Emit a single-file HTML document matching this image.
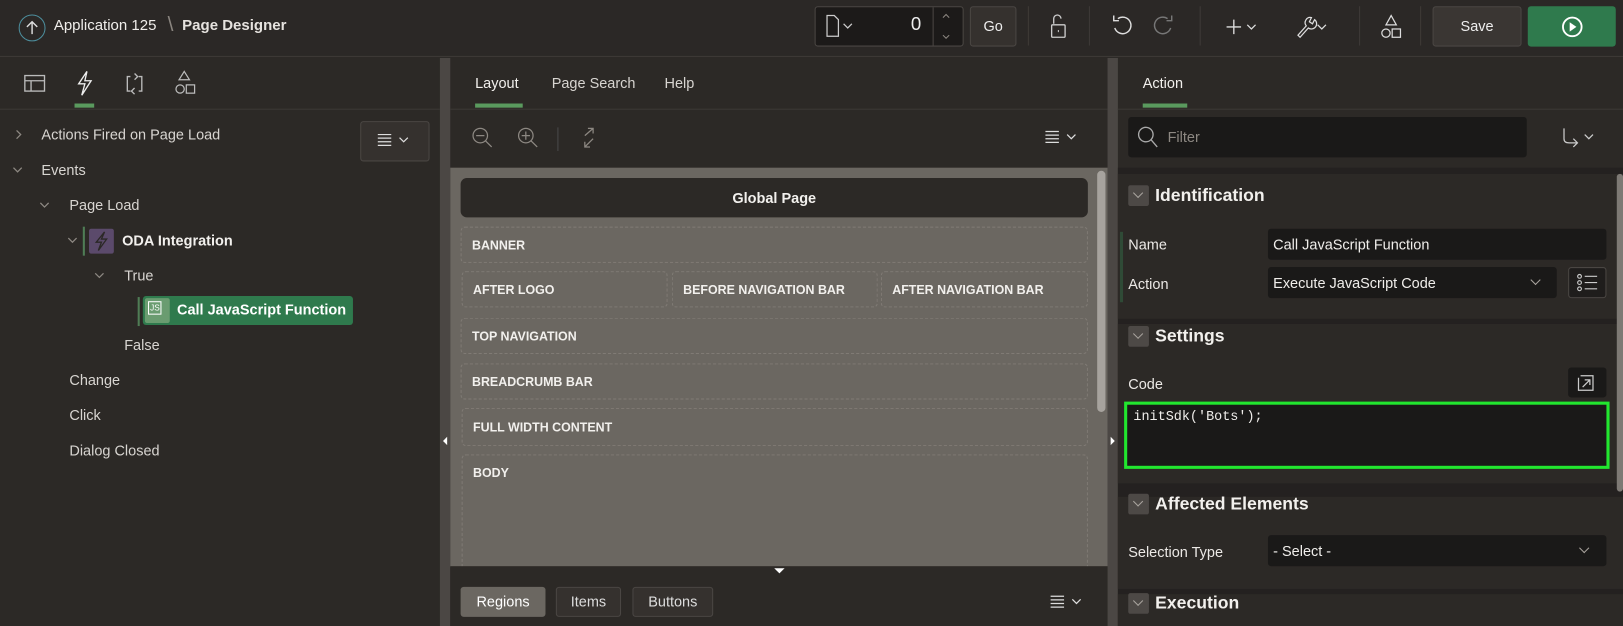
<!DOCTYPE html>
<html><head><meta charset="utf-8"><style>
*{box-sizing:border-box;margin:0;padding:0}
html,body{width:1623px;height:626px;overflow:hidden;background:#2c2926}
#w{position:absolute;left:0;top:0;width:1568px;height:605px;transform:scale(1.03508);transform-origin:0 0;font-family:"Liberation Sans",sans-serif;color:#e8e6e3;overflow:hidden}
.a{position:absolute}
.t{font-size:14px;color:#d8d5d1;white-space:nowrap}
.rg{position:absolute;border:1px dashed #807b75;border-radius:4px;font-size:12px;font-weight:bold;color:#f2f0ed;padding-left:10px;display:flex;align-items:center}
.btn{position:absolute;border:1px solid #4a4643;border-radius:3px;background:#35312e}
.chev{position:absolute;width:7px;height:7px;border-right:1.3px solid #a9a49e;border-bottom:1.3px solid #a9a49e}
.sec{position:absolute;left:1080px;width:537px;background:#2c2926}
.cb{position:absolute;width:20px;height:20px;background:#4d4946;border-radius:2px}
.lbl{position:absolute;font-size:14px;color:#ece9e6}
.inp{position:absolute;background:#1a1918;border-radius:3px;font-size:14px;color:#f0eeeb;padding-left:5px;display:flex;align-items:center}
.h{position:absolute;font-size:17px;font-weight:bold;color:#f2f0ed}
</style></head><body><div id="w">
<div class="a" style="left:0;top:0;width:1623px;height:55px;background:#2b2826;border-bottom:1px solid #3e3a37"></div>
<div class="a" style="left:18px;top:14px;width:26px;height:26px;border:1.5px solid #4d8f9e;border-radius:50%"></div>
<svg class="a" style="left:24px;top:19px" width="14" height="16"><path d="M7 2V14M2 7L7 2L12 7" stroke="#ddd" stroke-width="1.4" fill="none"/></svg>
<div class="a t" style="left:52px;top:17px;font-size:14.5px;color:#f0eeeb">Application 125</div>
<div class="a" style="left:162px;top:13px;font-size:20px;color:#8a857f">\</div>
<div class="a t" style="left:176px;top:17px;font-size:14.5px;font-weight:bold;color:#e6e3df">Page Designer</div>
<div class="a" style="left:787px;top:6px;width:144px;height:39px;background:#1c1a19;border:1px solid #4a4643;border-radius:3px"></div>
<div class="a" style="left:901px;top:7px;width:1px;height:37px;background:#4a4643"></div>
<svg class="a" style="left:797px;top:13px" width="40" height="24"><path d="M2 2H9L13 6V22H2Z" stroke="#ccc" fill="none" stroke-width="1.2"/><path d="M18 10L22 14L26 10" stroke="#ccc" fill="none" stroke-width="1.2"/></svg>
<div class="a" style="left:880px;top:13px;font-size:18px;color:#eee">0</div>
<svg class="a" style="left:906px;top:10px" width="16" height="30"><path d="M5 7L8 4L11 7M5 24L8 27L11 24" stroke="#8d8882" fill="none"/></svg>
<div class="btn" style="left:937px;top:6px;width:45px;height:39px;color:#eee;font-size:14px;text-align:center;line-height:37px">Go</div>
<div class="a" style="left:993px;top:6px;width:1px;height:38px;background:#3e3a37"></div>
<svg class="a" style="left:1010px;top:13px" width="26" height="26"><path d="M8 10V5a3.5 3.5 0 0 1 7 0" stroke="#ccc" fill="none" stroke-width="1.3"/><rect x="6" y="11" width="13" height="12" rx="1" stroke="#ccc" fill="none" stroke-width="1.3"/><path d="M12.5 16v2" stroke="#ccc"/></svg>
<div class="a" style="left:1052px;top:6px;width:1px;height:38px;background:#3e3a37"></div>
<svg class="a" style="left:1072px;top:12px" width="70" height="28"><path d="M8 6A8 8 0 1 1 5 15" stroke="#ddd" fill="none" stroke-width="1.4"/><path d="M4 3V8H9" stroke="#ddd" fill="none" stroke-width="1.4"/><path d="M56 6A8 8 0 1 0 59 15" stroke="#777" fill="none" stroke-width="1.4"/><path d="M60 3V8H55" stroke="#777" fill="none" stroke-width="1.4"/></svg>
<div class="a" style="left:1159px;top:6px;width:1px;height:38px;background:#3e3a37"></div>
<svg class="a" style="left:1182px;top:14px" width="110" height="24"><path d="M3 12H17M10 5V19" stroke="#ddd" stroke-width="1.3"/><path d="M23 10L27 14L31 10" stroke="#ddd" fill="none" stroke-width="1.2"/><path d="M72 20L80 11A5 5 0 0 1 85 3L83 7L86 9L88 5A5 5 0 0 1 82 13L74 22Z" stroke="#ddd" fill="none" stroke-width="1.2"/><path d="M91 10L95 14L99 10" stroke="#ddd" fill="none" stroke-width="1.2"/></svg>
<div class="a" style="left:1313px;top:6px;width:1px;height:38px;background:#3e3a37"></div>
<svg class="a" style="left:1332px;top:13px" width="24" height="26"><path d="M12 2L17 11H7Z" stroke="#ddd" fill="none" stroke-width="1.2"/><circle cx="7" cy="19" r="4" stroke="#ddd" fill="none" stroke-width="1.2"/><rect x="13" y="15" width="8" height="8" stroke="#ddd" fill="none" stroke-width="1.2"/></svg>
<div class="a" style="left:1372px;top:6px;width:1px;height:38px;background:#3e3a37"></div>
<div class="btn" style="left:1384px;top:6px;width:86px;height:39px;color:#eee;font-size:14px;text-align:center;line-height:37px;background:#3a3633">Save</div>
<div class="a" style="left:1476px;top:6px;width:85px;height:39px;background:#2f7a4d;border-radius:3px"></div>
<svg class="a" style="left:1507px;top:14px" width="24" height="24"><circle cx="12" cy="12" r="9" stroke="#fff" fill="none" stroke-width="1.8"/><path d="M9.5 7.5L16 12L9.5 16.5Z" fill="#fff"/></svg>

<div class="a" style="left:425px;top:56px;width:10px;height:570px;background:#4b4744"></div>
<div class="a" style="left:1070px;top:56px;width:10px;height:570px;background:#4b4744"></div>
<div class="a" style="left:428px;top:422px;width:0;height:0;border-top:4px solid transparent;border-bottom:4px solid transparent;border-right:4px solid #fff"></div>
<div class="a" style="left:1073px;top:422px;width:0;height:0;border-top:4px solid transparent;border-bottom:4px solid transparent;border-left:4px solid #fff"></div>

<div class="a" style="left:0;top:105px;width:425px;height:1px;background:#3c3936"></div>
<svg class="a" style="left:20px;top:66px" width="180" height="30"><rect x="4" y="7" width="19" height="15" stroke="#bbb" fill="none" stroke-width="1.3"/><path d="M4 12H23M10 12V22" stroke="#bbb" stroke-width="1.3"/><path d="M64 3L56 15H62L59 26L68 12H62Z" stroke="#eee" fill="none" stroke-width="1.3"/><path d="M106 8H103V22H106M114 22H117V8H114M110 5L113 8L110 11M110 19L107 22L110 25" stroke="#bbb" fill="none" stroke-width="1.3"/><path d="M158 3L163 11H153Z" stroke="#bbb" fill="none" stroke-width="1.2"/><circle cx="154" cy="20" r="4" stroke="#bbb" fill="none" stroke-width="1.2"/><rect x="160" y="16" width="8" height="8" stroke="#bbb" fill="none" stroke-width="1.2"/></svg>
<div class="a" style="left:72px;top:100px;width:19px;height:4px;background:#5a9a5e"></div>
<div class="btn" style="left:348px;top:117px;width:67px;height:39px;background:#35312e"></div>
<svg class="a" style="left:364px;top:128px" width="36" height="16"><path d="M1 2H14M1 5.5H14M1 9H14M1 12.5H14" stroke="#ddd" stroke-width="1.2"/><path d="M22 5L26 9L30 5" stroke="#ddd" fill="none" stroke-width="1.2"/></svg>
<svg class="a" style="left:8px;top:118px" width="140" height="230" fill="none" stroke="#8d8882" stroke-width="1.2"><path d="M8 8L12 12L8 16"/><path d="M5 44L9 48L13 44"/><path d="M31 78L35 82L39 78"/><path d="M58 112L62 116L66 112"/><path d="M84 146L88 150L92 146"/></svg>
<div class="a t" style="left:40px;top:122px">Actions Fired on Page Load</div>
<div class="a t" style="left:40px;top:156px">Events</div>
<div class="a t" style="left:67px;top:190px">Page Load</div>
<div class="a" style="left:80px;top:219px;width:2px;height:28px;background:#4f7d55"></div>
<div class="a" style="left:86px;top:221px;width:24px;height:24px;background:#5b4a6b;border-radius:2px"></div>
<svg class="a" style="left:90px;top:223px" width="16" height="20"><path d="M11 1L3 11H8L5 19L13 8H8Z" stroke="#2b2826" fill="none" stroke-width="1.3"/></svg>
<div class="a t" style="left:118px;top:224px;font-weight:bold;color:#f2f0ed">ODA Integration</div>
<div class="a t" style="left:120px;top:258px">True</div>
<div class="a" style="left:133px;top:287px;width:2px;height:28px;background:#4f7d55"></div>
<div class="a" style="left:138px;top:286px;width:203px;height:28px;background:#2f7a4d;border-radius:3px"></div>
<div class="a" style="left:140px;top:288px;width:24px;height:24px;background:#6a9c70;border-radius:2px"></div>
<div class="a" style="left:143px;top:291px;font-size:8px;color:#fff;border:1px solid #fff;padding:1px">JS</div>
<div class="a t" style="left:171px;top:291px;font-weight:bold;color:#fff">Call JavaScript Function</div>
<div class="a t" style="left:120px;top:325px">False</div>
<div class="a t" style="left:67px;top:359px">Change</div>
<div class="a t" style="left:67px;top:393px">Click</div>
<div class="a t" style="left:67px;top:427px">Dialog Closed</div>

<div class="a t" style="left:459px;top:72px;color:#f2f0ed">Layout</div>
<div class="a" style="left:459px;top:100px;width:46px;height:4px;background:#5a9a5e"></div>
<div class="a t" style="left:533px;top:72px">Page Search</div>
<div class="a t" style="left:642px;top:72px">Help</div>
<div class="a" style="left:435px;top:105px;width:635px;height:1px;background:#3c3936"></div>
<svg class="a" style="left:455px;top:122px" width="130" height="24" fill="none" stroke="#8d8882" stroke-width="1.2"><circle cx="9" cy="9" r="7"/><path d="M14 14L20 20M5 9H13"/><circle cx="53" cy="9" r="7"/><path d="M58 14L64 20M49 9H57M53 5V13"/><path d="M84 1V24" stroke="#444"/><path d="M110 4L118 -3M113 -3H118V2M116 -2" transform="translate(0,5)"/><path d="M110 20L118 12M110 15V20H115"/></svg>
<svg class="a" style="left:1009px;top:125px" width="36" height="16"><path d="M1 2H14M1 5.5H14M1 9H14M1 12.5H14" stroke="#ddd" stroke-width="1.2"/><path d="M22 5L26 9L30 5" stroke="#ddd" fill="none" stroke-width="1.2"/></svg>
<div class="a" style="left:435px;top:162px;width:635px;height:386px;background:#6b6761"></div>
<div class="a" style="left:1060px;top:165px;width:8px;height:233px;background:#a7a39e;border-radius:4px"></div>
<div class="a" style="left:445px;top:172px;width:606px;height:38px;background:#2c2926;border-radius:6px;font-size:14px;font-weight:bold;color:#f2f0ed;text-align:center;line-height:38px">Global Page</div>
<div class="rg" style="left:445px;top:219px;width:606px;height:35px">BANNER</div>
<div class="rg" style="left:446px;top:262px;width:199px;height:35px">AFTER LOGO</div>
<div class="rg" style="left:649px;top:262px;width:199px;height:35px">BEFORE NAVIGATION BAR</div>
<div class="rg" style="left:851px;top:262px;width:200px;height:35px">AFTER NAVIGATION BAR</div>
<div class="rg" style="left:445px;top:307px;width:606px;height:35px">TOP NAVIGATION</div>
<div class="rg" style="left:445px;top:351px;width:606px;height:35px">BREADCRUMB BAR</div>
<div class="rg" style="left:446px;top:394px;width:605px;height:37px">FULL WIDTH CONTENT</div>
<div class="rg" style="left:446px;top:439px;width:605px;height:120px;align-items:flex-start;padding-top:10px">BODY</div>
<div class="a" style="left:435px;top:547px;width:635px;height:79px;background:#2c2926"></div>
<div class="a" style="left:748px;top:549px;width:0;height:0;border-left:5px solid transparent;border-right:5px solid transparent;border-top:5px solid #fff"></div>
<div class="a" style="left:445px;top:567px;width:82px;height:29px;background:#6b6761;border-radius:3px;font-size:14px;color:#fff;text-align:center;line-height:29px">Regions</div>
<div class="btn" style="left:537px;top:567px;width:63px;height:29px;font-size:14px;color:#ddd;text-align:center;line-height:27px">Items</div>
<div class="btn" style="left:611px;top:567px;width:78px;height:29px;font-size:14px;color:#ddd;text-align:center;line-height:27px">Buttons</div>
<svg class="a" style="left:1014px;top:574px" width="36" height="16"><path d="M1 2H14M1 5.5H14M1 9H14M1 12.5H14" stroke="#ddd" stroke-width="1.2"/><path d="M22 5L26 9L30 5" stroke="#ddd" fill="none" stroke-width="1.2"/></svg>

<div class="a t" style="left:1104px;top:72px;color:#f2f0ed">Action</div>
<div class="a" style="left:1104px;top:100px;width:43px;height:4px;background:#5a9a5e"></div>
<div class="a" style="left:1080px;top:105px;width:543px;height:1px;background:#3c3936"></div>
<div class="a" style="left:1090px;top:113px;width:385px;height:39px;background:#1a1918;border-radius:3px"></div>
<svg class="a" style="left:1098px;top:121px" width="24" height="24"><circle cx="9" cy="9" r="7" stroke="#aaa" fill="none" stroke-width="1.3"/><path d="M14 14L20 21" stroke="#aaa" stroke-width="1.3"/></svg>
<div class="a t" style="left:1128px;top:124px;color:#8d8882">Filter</div>
<svg class="a" style="left:1508px;top:122px" width="42" height="26"><path d="M3 2V12Q3 16 8 16H16M12 12L16 16L12 20" stroke="#ccc" fill="none" stroke-width="1.2"/><path d="M23 8L27 12L31 8" stroke="#ccc" fill="none" stroke-width="1.2"/></svg>
<div class="a" style="left:1080px;top:162px;width:543px;height:464px;background:#242120"></div>
<div class="sec" style="top:168px;height:140px"></div>
<div class="sec" style="top:313px;height:154px"></div>
<div class="sec" style="top:480px;height:89px"></div>
<div class="sec" style="top:574px;height:52px"></div>
<div class="a" style="left:1562px;top:168px;width:6px;height:307px;background:#7d7974;border-radius:3px"></div>
<div class="cb" style="left:1090px;top:179px"></div><div class="chev" style="left:1096px;top:183px;transform:rotate(45deg)"></div>
<div class="h" style="left:1116px;top:179px">Identification</div>
<div class="a" style="left:1082px;top:224px;width:3px;height:68px;background:#2f4a36"></div>
<div class="lbl" style="left:1090px;top:228px">Name</div>
<div class="inp" style="left:1225px;top:221px;width:327px;height:30px">Call JavaScript Function</div>
<div class="lbl" style="left:1090px;top:266px">Action</div>
<div class="inp" style="left:1225px;top:258px;width:279px;height:30px">Execute JavaScript Code</div>
<div class="chev" style="left:1480px;top:267px;transform:rotate(45deg)"></div>
<div class="a" style="left:1515px;top:258px;width:37px;height:30px;background:#1f1d1c;border:1px solid #4a4643;border-radius:3px"></div>
<svg class="a" style="left:1523px;top:264px" width="22" height="18"><g stroke="#ccc" fill="none" stroke-width="1.1"><circle cx="3" cy="3" r="1.8"/><circle cx="3" cy="9" r="1.8"/><circle cx="3" cy="15" r="1.8"/><path d="M8 3H20M8 9H20M8 15H20"/></g></svg>
<div class="cb" style="left:1090px;top:315px"></div><div class="chev" style="left:1096px;top:319px;transform:rotate(45deg)"></div>
<div class="h" style="left:1116px;top:315px">Settings</div>
<div class="lbl" style="left:1090px;top:363px">Code</div>
<div class="a" style="left:1515px;top:355px;width:37px;height:29px;background:#1a1918;border-radius:3px"></div>
<svg class="a" style="left:1522px;top:360px" width="22" height="20"><path d="M3 5V17H17V3H5M7 14L14 7M9 7H14V12" stroke="#ccc" fill="none" stroke-width="1.2"/></svg>
<div class="a" style="left:1086px;top:388px;width:469px;height:65px;background:#1a1918;border:3px solid #22e62f"></div>
<div class="a" style="left:1095px;top:395px;font-family:'Liberation Mono',monospace;font-size:13px;color:#f0eeeb">initSdk('Bots');</div>
<div class="cb" style="left:1090px;top:477px"></div><div class="chev" style="left:1096px;top:481px;transform:rotate(45deg)"></div>
<div class="h" style="left:1116px;top:477px">Affected Elements</div>
<div class="lbl" style="left:1090px;top:525px">Selection Type</div>
<div class="inp" style="left:1225px;top:517px;width:327px;height:30px">- Select -</div>
<div class="chev" style="left:1527px;top:526px;transform:rotate(45deg)"></div>
<div class="cb" style="left:1090px;top:573px"></div><div class="chev" style="left:1096px;top:577px;transform:rotate(45deg)"></div>
<div class="h" style="left:1116px;top:573px">Execution</div>
</div></body></html>
